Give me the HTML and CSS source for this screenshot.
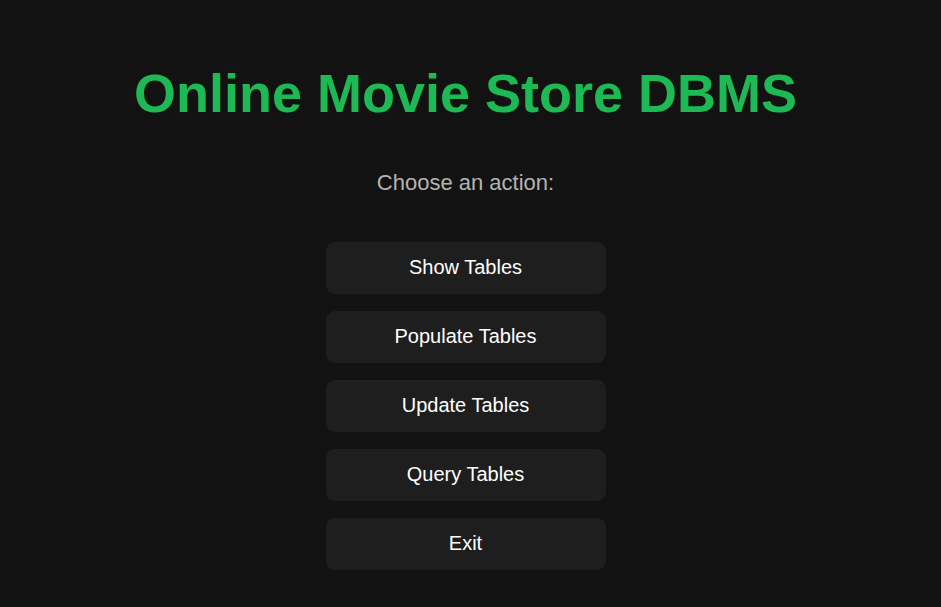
FILE: index.html
```html
<!DOCTYPE html>
<html lang="en">
<head>
<meta charset="utf-8">
<title>Online Movie Store DBMS</title>
<link rel="stylesheet" href="styles.css">
</head>
<body>
<main class="menu">
<h1 class="title">Online Movie Store DBMS</h1>
<p class="prompt">Choose an action:</p>
<div class="actions">
<button class="action" type="button">Show Tables</button>
<button class="action" type="button">Populate Tables</button>
<button class="action" type="button">Update Tables</button>
<button class="action" type="button">Query Tables</button>
<button class="action" type="button">Exit</button>
</div>
</main>
</body>
</html>
```
FILE: styles.css
```css
* { box-sizing: border-box; }
body {
  margin: 0;
  min-height: 100vh;
  background: #121212;
  color: #fff;
  font-family: Arial, "Liberation Sans", sans-serif;
}
.menu {
  display: flex;
  flex-direction: column;
  align-items: center;
  padding: 60px 10px 36px 0;
}
.title {
  margin: 0;
  color: #1db954;
  font-size: 54px;
  line-height: 66px;
  text-align: center;
}
.prompt {
  margin: 44px 0 46px;
  color: #b3b3b3;
  font-size: 22px;
  line-height: 26px;
}
.actions {
  display: grid;
  gap: 17px;
  width: 280px;
}
.action {
  height: 52px;
  padding: 0 6px 2px;
  border: 0;
  border-radius: 9px;
  background: #1e1e1e;
  color: #fff;
  font: inherit;
  font-size: 20px;
  cursor: pointer;
}
```
